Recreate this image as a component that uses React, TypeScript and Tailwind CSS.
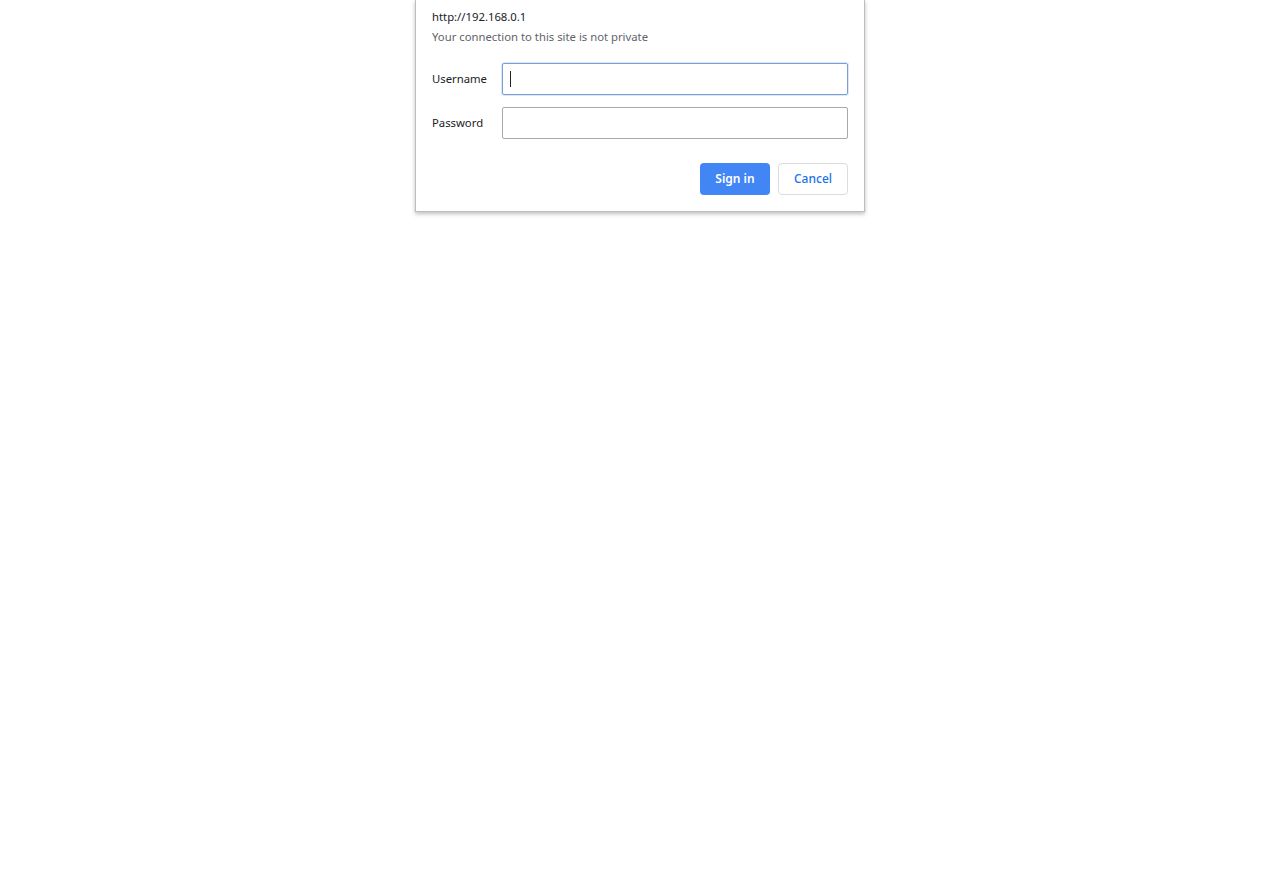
export default function App() {
  return (
    <div className="min-h-[877px] bg-white font-['Noto_Sans',sans-serif] text-[11.3px]">
      <div className="mx-auto w-[450px] border border-t-0 border-[#bdbdbd] bg-white px-4 pb-4 pt-[7px] shadow-[0_2px_4px_rgba(0,0,0,0.25)]">
        <div className="leading-5 text-[#202124]">http://192.168.0.1</div>
        <div className="leading-5 text-[#5f6368]">Your connection to this site is not private</div>

        <div className="mt-[16px] flex flex-col gap-3">
          <label className="flex items-center">
            <span className="w-[70px] text-[#202124]">Username</span>
            <div className="relative flex-1">
              <input
                autoFocus
                className="h-8 w-full rounded-[2px] border border-[#7a9fd8] px-2 caret-transparent outline-none shadow-[0_0_0_1px_rgba(122,159,216,0.25)]"
              />
              <span className="pointer-events-none absolute left-[8px] top-[8px] h-4 w-px bg-[#202124]" />
            </div>
          </label>
          <label className="flex items-center">
            <span className="w-[70px] text-[#202124]">Password</span>
            <input type="password" className="h-8 flex-1 rounded-[2px] border border-[#a9a9a9] px-2 outline-none" />
          </label>
        </div>

        <div className="mt-6 flex justify-end gap-2 text-[12px]">
          <button className="h-8 w-[70px] rounded-[4px] bg-[#4285f4] font-semibold text-white">Sign in</button>
          <button className="h-8 w-[70px] rounded-[4px] border border-[#dadce0] bg-white font-medium text-[#1a73e8]">
            Cancel
          </button>
        </div>
      </div>
    </div>
  )
}
